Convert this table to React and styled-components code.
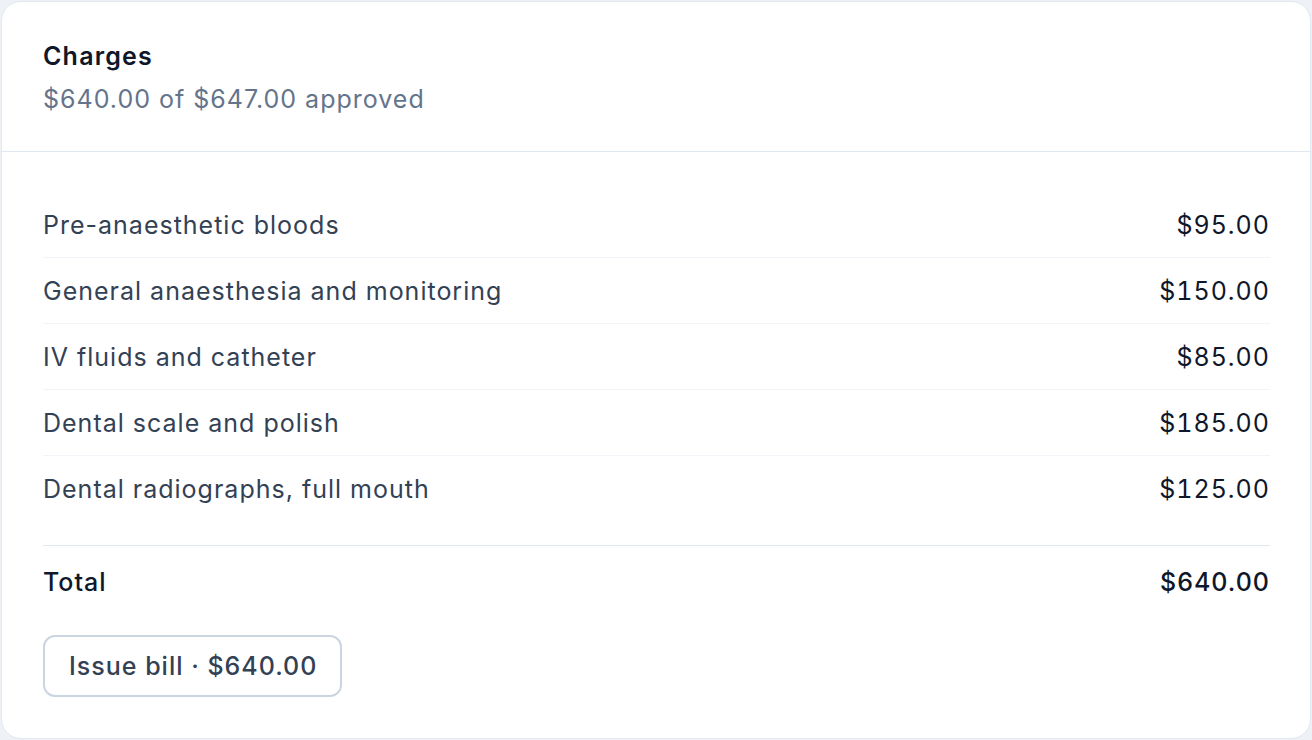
import React from "react";
import styled, { createGlobalStyle } from "styled-components";

const Global = createGlobalStyle`
  html, body { margin: 0; padding: 0; }
  body {
    background: #eef2f6;
    font-family: Inter, "Noto Sans", "Liberation Sans", sans-serif;
    -webkit-font-smoothing: antialiased;
    letter-spacing: 1px;
  }
  #root { padding: 1px; box-sizing: border-box; }
`;

const Card = styled.section`
  box-sizing: border-box;
  height: 738px;
  background: #ffffff;
  border: 1px solid #e2e8f0;
  border-radius: 20px;
  display: flex;
  flex-direction: column;
`;

const Header = styled.header`
  padding: 38px 41px 36px;
  border-bottom: 1px solid #e2e8f0;
  display: flex;
  flex-direction: column;
  gap: 11px;
`;

const Title = styled.h2`
  margin: 0;
  font-size: 25px;
  line-height: 32px;
  font-weight: 600;
  color: #0f172a;
  letter-spacing: 1.2px;
`;

const Subtitle = styled.p`
  margin: 0;
  font-size: 25px;
  line-height: 32px;
  font-weight: 400;
  color: #64748b;
`;

const Body = styled.div`
  padding: 40px 40px 41px 41px;
  display: flex;
  flex-direction: column;
`;

const List = styled.ul`
  list-style: none;
  margin: 0;
  padding: 0;
`;

const Row = styled.li`
  display: flex;
  justify-content: space-between;
  align-items: center;
  height: 65px;
  border-bottom: 1px solid ${(p) => (p.$last ? "transparent" : "#f1f5f9")};
  font-size: 25px;
  line-height: 32px;
`;

const Label = styled.span`
  color: #334155;
`;

const Amount = styled.span`
  color: #0f172a;
  font-variant-numeric: tabular-nums;
`;

const TotalRow = styled.div`
  margin-top: 23px;
  padding-top: 20px;
  border-top: 1px solid #e2e8f0;
  display: flex;
  justify-content: space-between;
  align-items: center;
  font-size: 25px;
  line-height: 32px;
  font-weight: 500;
  color: #0f172a;
`;

const Actions = styled.div`
  margin-top: 37px;
  display: flex;
`;

const Button = styled.button`
  font-family: inherit;
  font-size: 25px;
  line-height: 32px;
  font-weight: 500;
  letter-spacing: 1px;
  color: #334155;
  background: #ffffff;
  border: 2px solid #cbd5e1;
  border-radius: 12px;
  padding: 13px 23px 13px 24px;
  cursor: pointer;
`;

const items = [
  ["Pre-anaesthetic bloods", "$95.00"],
  ["General anaesthesia and monitoring", "$150.00"],
  ["IV fluids and catheter", "$85.00"],
  ["Dental scale and polish", "$185.00"],
  ["Dental radiographs, full mouth", "$125.00"],
];

export default function App() {
  return (
    <>
      <Global />
      <Card>
        <Header>
          <Title>Charges</Title>
          <Subtitle>$640.00 of $647.00 approved</Subtitle>
        </Header>
        <Body>
          <List>
            {items.map(([label, amount], i) => (
              <Row key={label} $last={i === items.length - 1}>
                <Label>{label}</Label>
                <Amount>{amount}</Amount>
              </Row>
            ))}
          </List>
          <TotalRow>
            <span>Total</span>
            <span>$640.00</span>
          </TotalRow>
          <Actions>
            <Button>Issue bill · $640.00</Button>
          </Actions>
        </Body>
      </Card>
    </>
  );
}
